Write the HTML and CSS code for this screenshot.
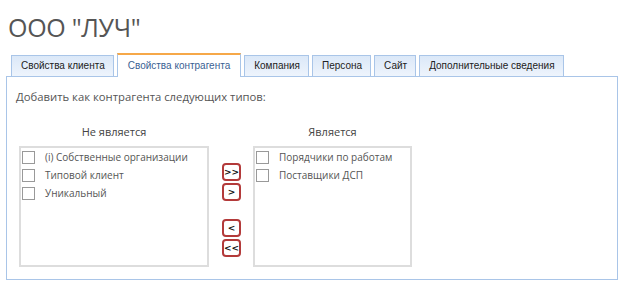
FILE: index.html
```html
<!DOCTYPE html>
<html lang="ru">
<head>
  <meta charset="UTF-8">
  <title>ООО "ЛУЧ"</title>
  <link rel="stylesheet" href="styles.css">
</head>
<body>
  <h1 class="title">ООО "ЛУЧ"</h1>

  <div class="tabs">
    <div class="tab">Свойства клиента</div>
    <div class="tab active">Свойства контрагента</div>
    <div class="tab">Компания</div>
    <div class="tab">Персона</div>
    <div class="tab">Сайт</div>
    <div class="tab">Дополнительные сведения</div>
  </div>

  <div class="panel">
    <p class="hint">Добавить как контрагента следующих типов:</p>

    <div class="picker">
      <div class="column col-left">
        <div class="col-title">Не является</div>
        <div class="list">
          <label class="item"><span class="box"></span>(i) Собственные организации</label>
          <label class="item"><span class="box"></span>Типовой клиент</label>
          <label class="item"><span class="box"></span>Уникальный</label>
        </div>
      </div>

      <div class="moves">
        <button class="move">&gt;&gt;</button>
        <button class="move">&gt;</button>
        <button class="move gap">&lt;</button>
        <button class="move">&lt;&lt;</button>
      </div>

      <div class="column col-right">
        <div class="col-title">Является</div>
        <div class="list">
          <label class="item"><span class="box"></span>Порядчики по работам</label>
          <label class="item"><span class="box"></span>Поставщики ДСП</label>
        </div>
      </div>
    </div>
  </div>
</body>
</html>
```

FILE: styles.css
```css
body {
  margin: 0;
  padding: 0 0 0 6px;
  background: #fff;
  font-family: 'Open Sans', 'Noto Sans', sans-serif;
  color: #555;
}

.title {
  margin: 0;
  padding: 9px 0 0 2px;
  height: 44px;
  font-size: 25px;
  font-weight: normal;
  letter-spacing: -0.3px;
  line-height: 36px;
  color: #555;
}

/* Вкладки */
.tabs {
  display: flex;
  gap: 3px;
  padding-left: 5px;
  height: 23px;
  align-items: flex-end;
}

.tab {
  height: 21px;
  padding: 0 8px 0 9px;
  box-sizing: border-box;
  border: 1px solid #a9c5e8;
  border-bottom: none;
  background: linear-gradient(#dbe8f8, #eef4fc);
  font-family: 'Liberation Sans', Arial, sans-serif;
  font-size: 10px;
  line-height: 20px;
  color: #222;
  white-space: nowrap;
}

.tab.active {
  background: #fff;
  border-top: 2px solid #f6a848;
  color: #3b5f93;
  line-height: 21px;
  margin-bottom: -1px;
  height: 24px;
  padding: 0 10px;
}

.panel {
  width: 612px;
  height: 204px;
  box-sizing: border-box;
  border: 1px solid #a9c5e8;
  padding: 0 0 0 9px;
}

.hint {
  margin: 11px 0 0;
  font-size: 11.3px;
  line-height: 18px;
  color: #555;
}

.picker {
  display: flex;
  margin-top: 17px;
  margin-left: 3px;
}

.column {
  display: flex;
  flex-direction: column;
}

.col-left .list {
  width: 190px;
}

.col-right .list {
  width: 159px;
}

.col-title {
  text-align: center;
  font-size: 11px;
  line-height: 18px;
  height: 23px;
  color: #444;
}

.list {
  height: 121px;
  box-sizing: border-box;
  border: 2px solid #ddd;
  padding: 0 0 0 1px;
}

.item {
  display: flex;
  align-items: center;
  height: 18px;
  font-size: 10px;
  color: #555;
}

.box {
  width: 11px;
  height: 11px;
  border: 1px solid #999;
  margin-right: 10px;
}

.moves {
  display: flex;
  flex-direction: column;
  gap: 2px;
  margin: 40px 12px 0 13px;
}

.move {
  width: 19px;
  height: 18px;
  padding: 0;
  border: 2px solid #b33a3a;
  border-radius: 4px;
  background: #fff;
  font-family: 'DejaVu Sans', sans-serif;
  font-size: 9px;
  font-weight: bold;
  color: #111;
  line-height: 12px;
}

.move.gap {
  margin-top: 16px;
}
```
